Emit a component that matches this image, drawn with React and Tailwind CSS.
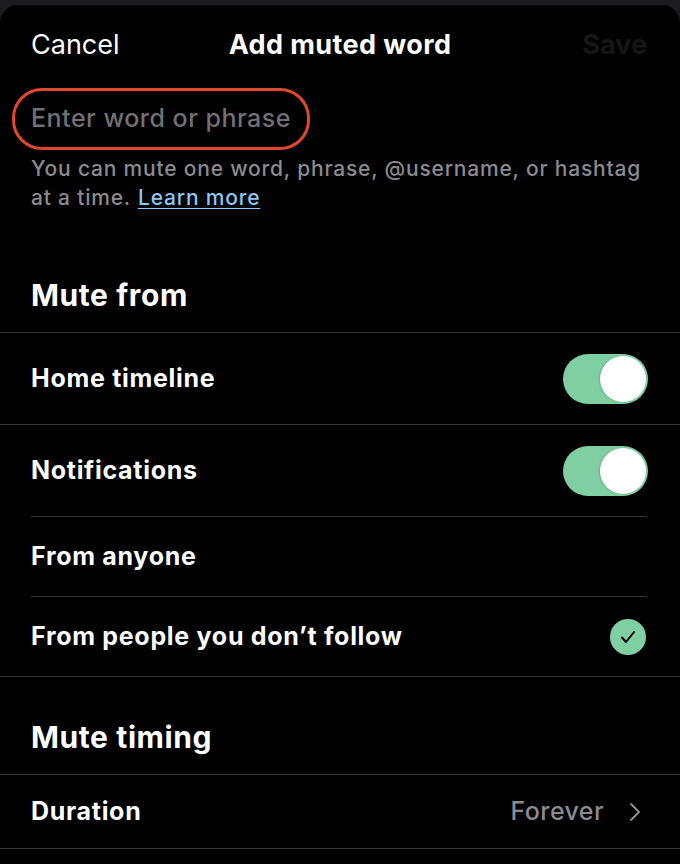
import React from "react";

const font = { fontFamily: 'Inter, "Liberation Sans", Arial, sans-serif' };

function Toggle() {
  return (
    <div className="relative h-[50px] w-[85px] rounded-full bg-[#7fcfa3]">
      <div className="absolute right-[2px] top-[2px] h-[46px] w-[46px] rounded-full bg-white shadow-[-1px_0_2px_rgba(0,0,0,0.15)]" />
    </div>
  );
}

function Check() {
  return (
    <div className="flex h-[36px] w-[36px] items-center justify-center rounded-full bg-[#7fcfa3]">
      <svg width="24" height="24" viewBox="0 0 24 24" fill="none" stroke="#000" strokeWidth="2" strokeLinecap="round" strokeLinejoin="round">
        <path d="M6 12.5l4 4.5L18 7" />
      </svg>
    </div>
  );
}

const row = "text-[25px] font-bold tracking-[0.7px]";
const section = "text-[30px] font-bold leading-[36px] tracking-[0.6px]";

export default function App() {
  return (
    <div className="min-h-[864px] w-[680px] bg-[#1c1c1e] pt-[5px]" style={font}>
      <div className="h-[859px] overflow-hidden rounded-t-[18px] bg-black text-white">
        {/* Header */}
        <div className="relative flex h-[80px] items-center justify-between px-[31px]">
          <span className="text-[27px]">Cancel</span>
          <span className="absolute left-1/2 -translate-x-1/2 text-[27px] font-bold tracking-[0.4px]">Add muted word</span>
          <span className="mr-[2px] text-[27px] font-bold text-[#161616]">Save</span>
        </div>

        {/* Input */}
        <div className="ml-[12px] mt-[3px] flex h-[62px] w-[298px] items-center rounded-[30px] border-[3px] border-[#e0472e] pl-[16px]">
          <span className="text-[25px] font-medium tracking-[0.5px] text-[#707075]">Enter word or phrase</span>
        </div>
        <div className="mt-[4px] px-[31px] text-[21px] font-medium leading-[29px] tracking-[0.8px] text-[#8b8b90]">
          <div>You can mute one word, phrase, @username, or hashtag</div>
          <div className="flex gap-[7px]">
            <span>at a time.</span>
            <span className="text-[#8cc8f2] underline decoration-1 underline-offset-[3px]">Learn more</span>
          </div>
        </div>

        {/* Mute from */}
        <div className="flex h-[120px] items-end px-[31px] pb-[19px]">
          <span className={section}>Mute from</span>
        </div>
        <div className="border-t border-[#38383a]" />
        <div className="flex h-[91px] items-center justify-between pl-[31px] pr-[32px]">
          <span className={row}>Home timeline</span>
          <Toggle />
        </div>
        <div className="border-t border-[#38383a]" />
        <div className="flex h-[91px] items-center justify-between pl-[31px] pr-[32px]">
          <span className={row}>Notifications</span>
          <Toggle />
        </div>
        <div className="ml-[31px] mr-[33px] border-t border-[#38383a]" />
        <div className="flex h-[79px] items-center justify-between pl-[31px] pr-[34px]">
          <span className={row}>From anyone</span>
        </div>
        <div className="ml-[31px] mr-[33px] border-t border-[#38383a]" />
        <div className="flex h-[79px] items-center justify-between pl-[31px] pr-[34px]">
          <span className={row}>From people you don’t follow</span>
          <Check />
        </div>
        <div className="border-t border-[#38383a]" />

        {/* Mute timing */}
        <div className="flex h-[97px] items-end px-[31px] pb-[19px]">
          <span className={section}>Mute timing</span>
        </div>
        <div className="border-t border-[#38383a]" />
        <div className="flex h-[73px] items-center justify-between pl-[31px] pr-[38px]">
          <span className={row}>Duration</span>
          <div className="flex items-center gap-[24px]">
            <span className="text-[25px] font-medium tracking-[0.4px] text-[#8b8b90]">Forever</span>
            <svg width="14" height="22" viewBox="0 0 14 22" fill="none" stroke="#8b8b90" strokeWidth="2" strokeLinecap="round" strokeLinejoin="round">
              <path d="M3 3l8 8-8 8" />
            </svg>
          </div>
        </div>
        <div className="border-t border-[#38383a]" />
      </div>
    </div>
  );
}
